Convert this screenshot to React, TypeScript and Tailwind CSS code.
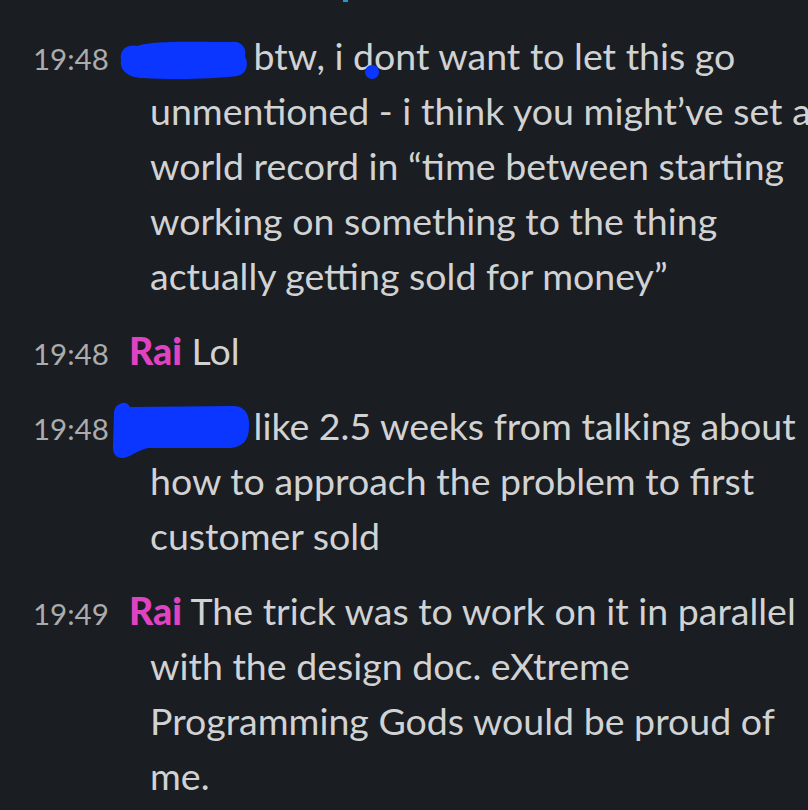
import React from "react";

// redaction scribbles, drawn over the sender name
const ScribbleOne = () => (
    <svg className="absolute left-[-16px] top-[-32px]" width="140" height="44" viewBox="0 0 140 44">
        <path
            d="M8 22 C6 12 14 6 24 8 C40 2 90 4 118 4 C128 2 134 10 132 18 C136 26 134 36 124 38 C100 41 60 42 30 40 C18 40 6 34 8 22 Z"
            fill="#0a36ff"
        />
    </svg>
);

const ScribbleTwo = () => (
    <svg className="absolute left-[-21px] top-[-39px]" width="148" height="60" viewBox="0 0 148 60">
        <path
            d="M10 4 C16 0 20 2 22 6 L125 5 C136 5 142 12 141 26 C141 40 134 46 122 47 L40 47 C30 49 24 55 16 57 C8 58 4 52 5 44 L6 12 C6 8 8 5 10 4 Z"
            fill="#0a36ff"
        />
    </svg>
);

interface Message {
    time: string;
    name?: string;
    scribble?: 1 | 2;
    lines: React.ReactNode[];
}

const messages: Message[] = [
    {
        time: "19:48",
        scribble: 1,
        lines: [
            <>
                btw, i{" "}
                <span className="relative">
                    d
                    <span className="absolute left-[calc(100%-9px)] bottom-[-1px] w-[14px] h-[14px] rounded-full bg-[#0a36ff]" />
                </span>
                ont want to let this go
            </>,
            "unmentioned - i think you might’ve set a",
            "world record in “time between starting",
            "working on something to the thing",
            "actually getting sold for money”",
        ],
    },
    {
        time: "19:48",
        name: "Rai",
        lines: ["Lol"],
    },
    {
        time: "19:48",
        scribble: 2,
        lines: ["like 2.5 weeks from talking about", "how to approach the problem to first", "customer sold"],
    },
    {
        time: "19:49",
        name: "Rai",
        lines: [
            "The trick was to work on it in parallel",
            "with the design doc. eXtreme",
            "Programming Gods would be proud of",
            "me.",
        ],
    },
];

const App: React.FC = () => {
    return (
        <div className="w-[808px] h-[810px] overflow-hidden bg-[#1a1d21] font-['Lato','Noto_Sans',sans-serif]">
            <div className="h-[2px] w-[5px] ml-[343px] bg-[#1d9bd1]" />

            <div className="pt-[26px] flex flex-col gap-[20px]">
                {messages.map((msg, i) => (
                    <div key={i} className="flex items-baseline">
                        <div className="w-[150px] shrink-0 pl-[33px] text-[29.5px] leading-[40px] text-[#abacad]">
                            {msg.time}
                        </div>
                        <div className="text-[37.5px] leading-[55px] text-[#d1d2d3] whitespace-nowrap">
                            {msg.lines.map((line, j) =>
                                j === 0 ? (
                                    <div key={j} className="-ml-[21px]">
                                        {msg.name && <span className="font-black text-[#e043c2]">{msg.name}</span>}
                                        {msg.scribble && (
                                            <span className="relative inline-block h-0 w-[115px]">
                                                {msg.scribble === 1 ? <ScribbleOne /> : <ScribbleTwo />}
                                            </span>
                                        )}{" "}
                                        {line}
                                    </div>
                                ) : (
                                    <div key={j}>{line}</div>
                                )
                            )}
                        </div>
                    </div>
                ))}
            </div>
        </div>
    );
};

export default App;
